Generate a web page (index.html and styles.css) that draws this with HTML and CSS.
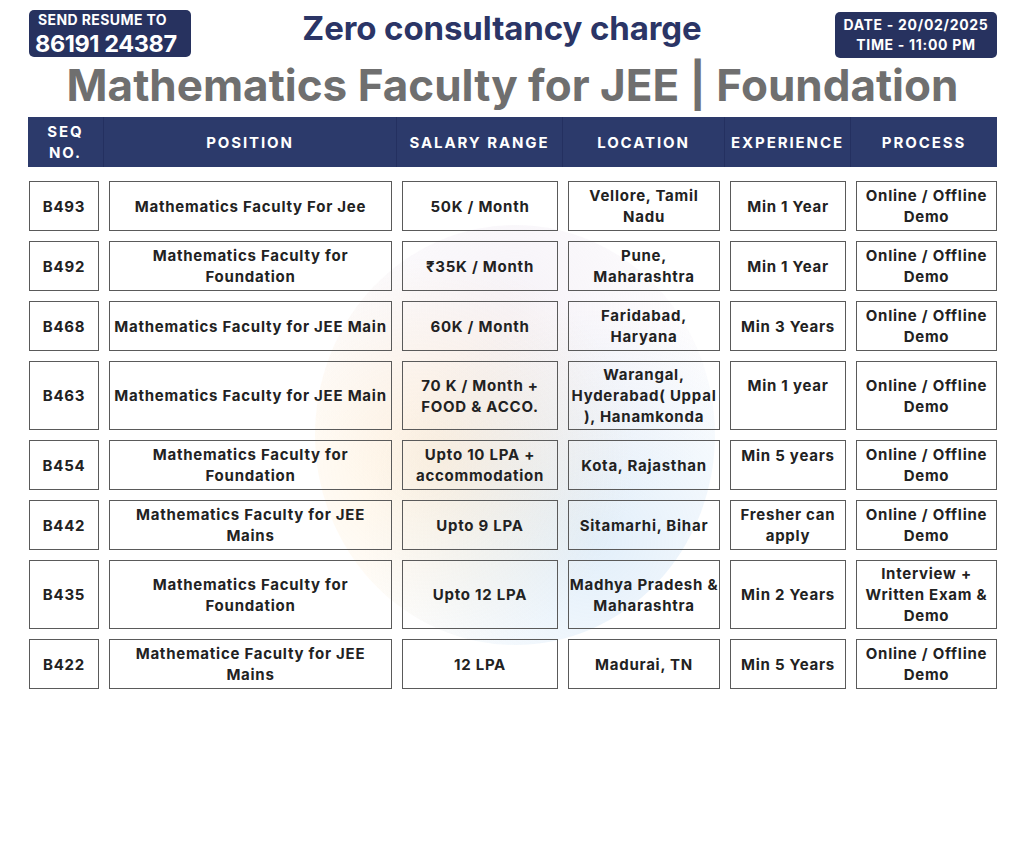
FILE: index.html
```html
<!DOCTYPE html>
<html lang="en">
<head>
<meta charset="utf-8">
<title>Mathematics Faculty for JEE | Foundation</title>
<link rel="stylesheet" href="styles.css">
</head>
<body>
<div class="page">
  <div class="watermark"></div>
  <header class="top">
    <div class="badge badge-left">
      <p class="b-text"><span class="b-small">SEND RESUME TO</span><br><span class="b-big">86191 24387</span></p>
    </div>
    <div class="tagline">Zero consultancy charge</div>
    <div class="badge badge-right">
      <div>DATE - 20/02/2025</div>
      <div>TIME - 11:00 PM</div>
    </div>
  </header>
  <h1 class="title">Mathematics Faculty for JEE | Foundation</h1>

  <div class="thead">
    <div class="th">SEQ<br>NO.</div>
    <div class="th">POSITION</div>
    <div class="th">SALARY RANGE</div>
    <div class="th">LOCATION</div>
    <div class="th">EXPERIENCE</div>
    <div class="th">PROCESS</div>
  </div>

  <div class="rows">
    <div class="cell">B493</div>
    <div class="cell">Mathematics Faculty For Jee</div>
    <div class="cell">50K / Month</div>
    <div class="cell">Vellore, Tamil<br>Nadu</div>
    <div class="cell">Min 1 Year</div>
    <div class="cell">Online / Offline<br>Demo</div>

    <div class="cell">B492</div>
    <div class="cell">Mathematics Faculty for<br>Foundation</div>
    <div class="cell">₹35K / Month</div>
    <div class="cell">Pune,<br>Maharashtra</div>
    <div class="cell">Min 1 Year</div>
    <div class="cell">Online / Offline<br>Demo</div>

    <div class="cell">B468</div>
    <div class="cell">Mathematics Faculty for JEE Main</div>
    <div class="cell">60K / Month</div>
    <div class="cell">Faridabad,<br>Haryana</div>
    <div class="cell">Min 3 Years</div>
    <div class="cell">Online / Offline<br>Demo</div>

    <div class="cell">B463</div>
    <div class="cell">Mathematics Faculty for JEE Main</div>
    <div class="cell">70 K / Month +<br>FOOD &amp; ACCO.</div>
    <div class="cell">Warangal,<br>Hyderabad( Uppal<br>), Hanamkonda</div>
    <div class="cell top-align tall">Min 1 year</div>
    <div class="cell">Online / Offline<br>Demo</div>

    <div class="cell">B454</div>
    <div class="cell">Mathematics Faculty for<br>Foundation</div>
    <div class="cell">Upto 10 LPA +<br>accommodation</div>
    <div class="cell">Kota, Rajasthan</div>
    <div class="cell top-align">Min 5 years</div>
    <div class="cell">Online / Offline<br>Demo</div>

    <div class="cell">B442</div>
    <div class="cell">Mathematics Faculty for JEE<br>Mains</div>
    <div class="cell">Upto 9 LPA</div>
    <div class="cell">Sitamarhi, Bihar</div>
    <div class="cell">Fresher can<br>apply</div>
    <div class="cell">Online / Offline<br>Demo</div>

    <div class="cell">B435</div>
    <div class="cell">Mathematics Faculty for<br>Foundation</div>
    <div class="cell">Upto 12 LPA</div>
    <div class="cell">Madhya Pradesh &amp;<br>Maharashtra</div>
    <div class="cell">Min 2 Years</div>
    <div class="cell">Interview +<br>Written Exam &amp;<br>Demo</div>

    <div class="cell">B422</div>
    <div class="cell">Mathematice Faculty for JEE<br>Mains</div>
    <div class="cell">12 LPA</div>
    <div class="cell">Madurai, TN</div>
    <div class="cell">Min 5 Years</div>
    <div class="cell">Online / Offline<br>Demo</div>
  </div>
</div>
</body>
</html>
```

FILE: styles.css
```css
* { box-sizing: border-box; }
html, body { margin: 0; padding: 0; background: #ffffff; }
body {
  font-family: Inter, "Liberation Sans", sans-serif;
  color: #222222;
}
.page {
  position: relative;
  width: 1024px;
  height: 868px;
  padding: 10px 27px 0 28px;
  overflow: hidden;
}
.watermark {
  position: absolute;
  left: 315px;
  top: 225px;
  width: 400px;
  height: 420px;
  border-radius: 50%;
  background:
    radial-gradient(circle at 30% 55%, rgba(255, 200, 120, 0.22), rgba(255, 200, 120, 0) 55%),
    radial-gradient(circle at 70% 75%, rgba(140, 190, 235, 0.25), rgba(140, 190, 235, 0) 55%),
    radial-gradient(circle at 50% 20%, rgba(230, 220, 235, 0.35), rgba(230, 220, 235, 0) 60%);
  z-index: 0;
}
.top {
  position: relative;
  z-index: 1;
  display: flex;
  justify-content: space-between;
  align-items: flex-start;
  height: 48px;
}
.badge {
  background: #27325f;
  color: #ffffff;
  border-radius: 5px;
  font-weight: 700;
}
.badge-left {
  width: 162px;
  height: 47px;
  margin-left: 1px;
  padding: 2px 0 0 9px;
}
.b-text {
  margin: 0;
  line-height: 20px;
}
.b-small {
  font-size: 14px;
  letter-spacing: 0.4px;
  display: inline-block;
  line-height: 16px;
  vertical-align: top;
}
.b-big {
  font-size: 23.5px;
  letter-spacing: -0.4px;
  display: inline-block;
  line-height: 24px;
  vertical-align: top;
  margin-left: -3px;
}
.tagline {
  font-size: 33px;
  font-weight: 700;
  color: #2b3566;
  line-height: 36px;
  margin-right: 22px;
  letter-spacing: -0.1px;
}
.badge-right {
  width: 162px;
  height: 46px;
  margin-top: 2px;
  text-align: center;
  font-size: 14px;
  line-height: 20px;
  letter-spacing: 0.7px;
  padding-top: 3px;
}
.title {
  position: relative;
  z-index: 1;
  margin: 1px 0 0;
  text-align: center;
  font-size: 44px;
  line-height: 52px;
  font-weight: 700;
  color: #6f6f6f;
  letter-spacing: 0px;
}
.thead {
  position: relative;
  z-index: 1;
  margin-top: 6px;
  display: grid;
  grid-template-columns: 75px 293px 166px 162px 126px 147px;
  width: 969px;
  height: 50px;
  background: #2c3a6b;
}
.th {
  display: flex;
  align-items: center;
  justify-content: center;
  text-align: center;
  color: #ffffff;
  font-weight: 700;
  font-size: 15px;
  line-height: 21px;
  letter-spacing: 1.9px;
}
.th + .th { border-left: 1px solid #243060; }
.rows {
  position: relative;
  z-index: 1;
  margin: 14px 0 0 1px;
  display: grid;
  grid-template-columns: 70px 283px 156px 152px 116px 141px;
  column-gap: 10px;
  row-gap: 10px;
}
.cell {
  min-height: 50px;
  border: 1.5px solid #5a5a5a;
  display: flex;
  align-items: center;
  justify-content: center;
  text-align: center;
  font-weight: 700;
  font-size: 15px;
  line-height: 21px;
  letter-spacing: 0.75px;
  padding: 2px 0;
  color: #222222;
  white-space: nowrap;
}
.cell.top-align { align-items: flex-start; padding-top: 4px; }
.cell.top-align.tall { padding-top: 13px; }
```
